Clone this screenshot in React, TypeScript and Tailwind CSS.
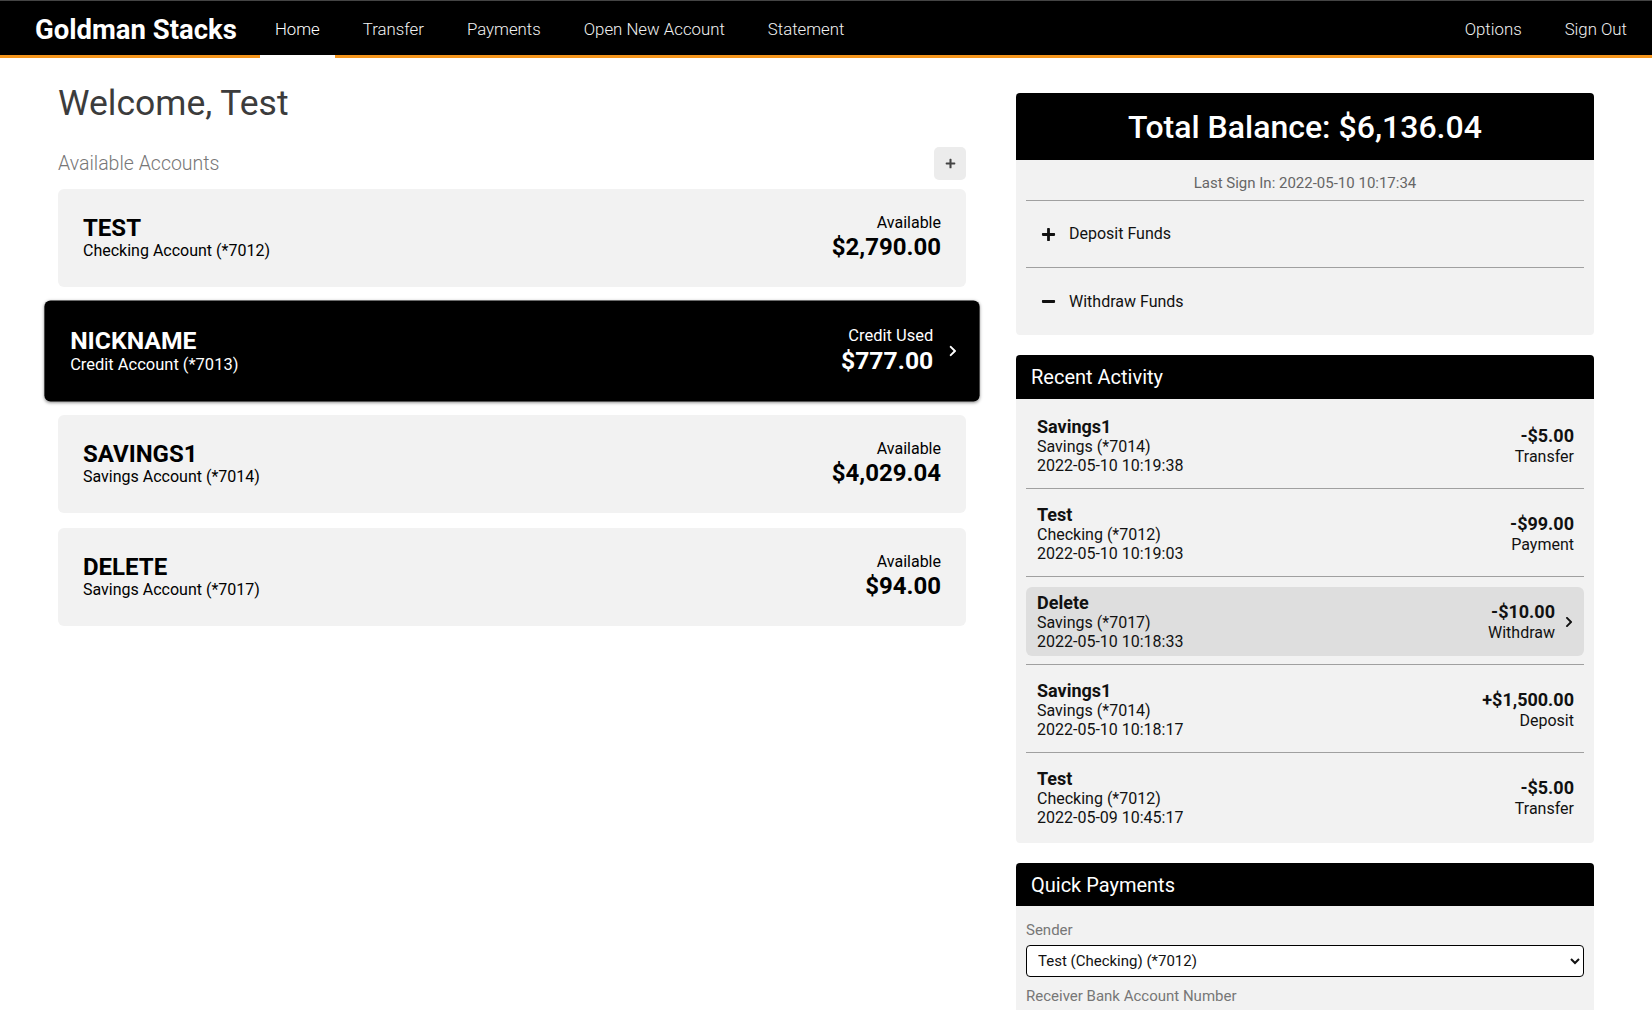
import clsx from "clsx";
import { FaChevronRight, FaMinus, FaPlus } from "react-icons/fa";

const navLinks = ["Home", "Transfer", "Payments", "Open New Account", "Statement"];

const accounts = [
  { name: "TEST", type: "Checking Account (*7012)", label: "Available", amount: "$2,790.00" },
  { name: "NICKNAME", type: "Credit Account (*7013)", label: "Credit Used", amount: "$777.00", active: true },
  { name: "SAVINGS1", type: "Savings Account (*7014)", label: "Available", amount: "$4,029.04" },
  { name: "DELETE", type: "Savings Account (*7017)", label: "Available", amount: "$94.00" },
];

const activity = [
  { name: "Savings1", account: "Savings (*7014)", date: "2022-05-10 10:19:38", amount: "-$5.00", kind: "Transfer" },
  { name: "Test", account: "Checking (*7012)", date: "2022-05-10 10:19:03", amount: "-$99.00", kind: "Payment" },
  { name: "Delete", account: "Savings (*7017)", date: "2022-05-10 10:18:33", amount: "-$10.00", kind: "Withdraw", active: true },
  { name: "Savings1", account: "Savings (*7014)", date: "2022-05-10 10:18:17", amount: "+$1,500.00", kind: "Deposit" },
  { name: "Test", account: "Checking (*7012)", date: "2022-05-09 10:45:17", amount: "-$5.00", kind: "Transfer" },
];

export default function App() {
  return (
    <div className="min-h-screen w-full bg-white font-['Roboto',sans-serif] text-[#111]">
      {/* Navigation */}
      <nav className="flex h-[58px] items-start border-t border-[#444] border-b-[3px] border-b-[#f5961d] bg-black pl-[35px] pr-[10px] text-[16.8px] font-light text-[#f2f2f2]">
        <div className="mr-[23px] flex h-[54px] items-center pt-[4px] text-[27.5px] font-bold text-white">Goldman Stacks</div>
        <ul className="flex gap-[13px]">
          {navLinks.map((link) => (
            <li
              key={link}
              className={clsx(
                "-mb-[3px] flex h-[57px] items-center border-b-[3px] px-[15px] pt-[4px]",
                link === "Home" ? "border-white text-white" : "border-transparent"
              )}
            >
              {link}
            </li>
          ))}
        </ul>
        <ul className="ml-auto flex gap-[13px]">
          <li className="flex h-[54px] items-center px-[15px] pt-[4px]">Options</li>
          <li className="flex h-[54px] items-center px-[15px] pt-[4px]">Sign Out</li>
        </ul>
      </nav>

      <main className="flex gap-[50px] px-[58px] pt-[23px]">
        {/* Accounts */}
        <section className="flex-1">
          <h1 className="text-[35.5px] leading-[44px] text-[#3c3c3c]">Welcome, Test</h1>
          <div className="mt-[22px] flex h-[33px] items-center justify-between">
            <h2 className="text-[19.5px] font-light text-[#777]">Available Accounts</h2>
            <button className="flex h-[33px] w-[32px] items-center justify-center rounded-[5px] bg-[#ececec] text-[#444]">
              <FaPlus size={11} />
            </button>
          </div>
          <div className="mt-[9px] flex flex-col gap-[15px]">
            {accounts.map((a) => (
              <div
                key={a.name}
                className={clsx(
                  "flex h-[98px] items-center justify-between rounded-[6px] pl-[25px]",
                  a.active
                    ? "scale-[1.03] bg-black pr-[20px] text-white shadow-[0_1px_3px_rgba(0,0,0,0.4)]"
                    : "bg-[#f2f2f2] pr-[25px] text-black"
                )}
              >
                <div>
                  <div className="text-[24px] font-bold leading-[26px]">{a.name}</div>
                  <div className="text-[16px] leading-[20px]">{a.type}</div>
                </div>
                <div className="flex items-center gap-[13px]">
                  <div className="text-right">
                    <div className="text-[16px] leading-[18px]">{a.label}</div>
                    <div className="text-[24px] font-bold leading-[31px]">{a.amount}</div>
                  </div>
                  {a.active && <FaChevronRight size={12} />}
                </div>
              </div>
            ))}
          </div>
        </section>

        {/* Sidebar */}
        <aside className="mt-[12px] flex w-[578px] shrink-0 flex-col gap-[20px] pb-[40px]">
          <div>
            <div className="flex h-[67px] items-center justify-center rounded-t-[4px] bg-black text-[32px] font-medium text-white">
              Total Balance: $6,136.04
            </div>
            <div className="rounded-b-[4px] bg-[#f2f2f2] px-[10px]">
              <div className="border-b border-[#a0a0a0] pt-[13px] pb-[7px] text-center text-[15px] leading-[20px] text-[#666]">
                Last Sign In: 2022-05-10 10:17:34
              </div>
              <div className="flex h-[67px] items-center gap-[13px] border-b border-[#a0a0a0] px-[15px] text-[16px]">
                <FaPlus size={15} />
                Deposit Funds
              </div>
              <div className="flex h-[67px] items-center gap-[13px] px-[15px] text-[16px]">
                <FaMinus size={15} />
                Withdraw Funds
              </div>
            </div>
          </div>

          <div>
            <div className="flex h-[44px] items-center rounded-t-[4px] bg-black pl-[15px] text-[20px] text-white">
              Recent Activity
            </div>
            <div className="rounded-b-[4px] bg-[#f2f2f2] px-[10px] pt-[2px] pb-[3px]">
              {activity.map((t, i) => (
                <div
                  key={i}
                  className={clsx("pt-[10px] pb-[8px]", i < activity.length - 1 && "border-b border-[#a0a0a0]")}
                >
                  <div
                    className={clsx(
                      "flex items-center justify-between rounded-[6px] py-[5px] pl-[11px]",
                      t.active ? "bg-[#dedede] pr-[9px]" : "pr-[10px]"
                    )}
                  >
                    <div>
                      <div className="text-[18px] font-bold leading-[21px]">{t.name}</div>
                      <div className="text-[16px] leading-[19px]">{t.account}</div>
                      <div className="text-[16px] leading-[19px]">{t.date}</div>
                    </div>
                    <div className="flex items-center gap-[8px]">
                      <div className="text-right">
                        <div className="text-[18px] font-bold leading-[21px]">{t.amount}</div>
                        <div className="text-[16px] leading-[21px]">{t.kind}</div>
                      </div>
                      {t.active && <FaChevronRight size={12} />}
                    </div>
                  </div>
                </div>
              ))}
            </div>
          </div>

          <div>
            <div className="flex h-[43px] items-center rounded-t-[4px] bg-black pl-[15px] text-[20px] text-white">
              Quick Payments
            </div>
            <div className="rounded-b-[4px] bg-[#f2f2f2] px-[10px] pt-[15px] pb-[16px]">
              <label className="block text-[15px] leading-[18px] text-[#777]">Sender</label>
              <select className="mt-[6px] h-[32px] w-full rounded-[4px] border border-black bg-white px-[7px] text-[15px] text-[#111]">
                <option>Test (Checking) (*7012)</option>
              </select>
              <label className="mt-[10px] block text-[15px] leading-[18px] text-[#777]">Receiver Bank Account Number</label>
              <input className="mt-[6px] h-[32px] w-full rounded-[4px] border border-black bg-white px-[10px] text-[15px]" />
              <label className="mt-[10px] block text-[15px] leading-[18px] text-[#777]">Amount</label>
              <input className="mt-[6px] h-[32px] w-full rounded-[4px] border border-black bg-white px-[10px] text-[15px]" />
              <button className="mt-[14px] h-[36px] w-full rounded-[4px] bg-black text-[16px] text-white">Send Payment</button>
            </div>
          </div>
        </aside>
      </main>
    </div>
  );
}
